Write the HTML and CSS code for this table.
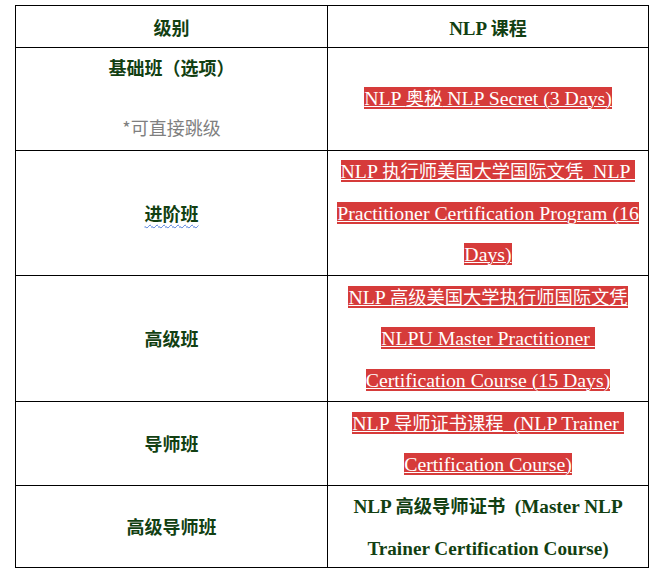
FILE: index.html
```html
<!DOCTYPE html>
<html lang="zh">
<head>
<meta charset="utf-8">
<title>NLP 课程</title>
<link rel="stylesheet" href="styles.css">
</head>
<body>
<div class="table">
  <div class="cell head head-zh"><p>级别</p></div>
  <div class="cell head"><p>NLP <span class="zh">课程</span></p></div>

  <div class="cell level r1">
    <p class="lv">基础班（选项）</p>
    <p class="note">*可直接跳级</p>
  </div>
  <div class="cell course r1">
    <p class="lines"><span class="hl">NLP <span class="zh">奥秘</span> NLP Secret (3 Days)</span></p>
  </div>

  <div class="cell level r2">
    <p class="lv"><span class="spell">进阶班</span></p>
  </div>
  <div class="cell course r2">
    <p class="lines"><span class="hl">NLP <span class="zh">执行师美国大学国际文凭</span>&nbsp; NLP&nbsp;</span><br><span class="hl">Practitioner Certification Program (16</span><br><span class="hl">Days)</span></p>
  </div>

  <div class="cell level r3">
    <p class="lv">高级班</p>
  </div>
  <div class="cell course r3">
    <p class="lines"><span class="hl">NLP <span class="zh">高级美国大学执行师国际文凭</span></span><br><span class="hl">NLPU Master Practitioner&nbsp;</span><br><span class="hl">Certification Course (15 Days)</span></p>
  </div>

  <div class="cell level r4">
    <p class="lv">导师班</p>
  </div>
  <div class="cell course r4">
    <p class="lines"><span class="hl">NLP <span class="zh">导师证书课程</span>&nbsp; (NLP Trainer&nbsp;</span><br><span class="hl">Certification Course)</span></p>
  </div>

  <div class="cell level r5">
    <p class="lv">高级导师班</p>
  </div>
  <div class="cell course r5">
    <p class="lines bold">NLP <span class="zh">高级导师证书</span>&nbsp; (Master NLP<br>Trainer Certification Course)</p>
  </div>
</div>
</body>
</html>
```

FILE: styles.css
```css
html, body {
  margin: 0;
  padding: 0;
  background: #ffffff;
}

body {
  padding: 5px 0 0 15px;
  font-family: "Liberation Serif", "Noto Sans CJK SC", serif;
}

.table {
  display: grid;
  grid-template-columns: 311px 320px;
  grid-template-rows: 41px 102px 124px 125px 83px 81px;
  gap: 1px;
  padding: 1px;
  background: #000000;
  width: max-content;
}

.cell {
  background: #ffffff;
  display: flex;
  flex-direction: column;
  align-items: center;
  justify-content: center;
  text-align: center;
  padding: 0 4px;
  min-width: 0;
}

.level.r1 {
  padding-bottom: 4px;
}

.course.r1 {
  padding-bottom: 2px;
}

p {
  margin: 0;
}

.zh {
  font-family: "Noto Sans CJK SC", sans-serif;
  font-size: 18.3px;
}

.head {
  font-family: "Liberation Serif", "Noto Sans CJK SC", serif;
  font-weight: bold;
  font-size: 19px;
  color: #123f12;
}

.head .zh {
  font-size: 18px;
}

.head-zh {
  font-family: "Noto Sans CJK SC", sans-serif;
  font-size: 18px;
}

.lv {
  font-family: "Noto Sans CJK SC", sans-serif;
  font-weight: bold;
  font-size: 18px;
  line-height: 41px;
  color: #123f12;
}

.note {
  font-family: "Noto Sans CJK SC", sans-serif;
  font-size: 18px;
  line-height: 41px;
  margin-top: 19px;
  color: #7f7f7f;
}

.spell {
  text-decoration: underline wavy #4a78d8;
  text-decoration-thickness: 1px;
  text-underline-offset: 3px;
}

.lines {
  font-family: "Liberation Serif", "Noto Sans CJK SC", serif;
  font-size: 19.8px;
  line-height: 41.5px;
  white-space: nowrap;
}

.hl {
  background: #d63b3a;
  color: #ffffff;
  text-decoration: underline;
  text-decoration-color: #ffffff;
  text-decoration-thickness: 1px;
}

.bold {
  font-weight: bold;
  font-size: 19.2px;
  color: #123f12;
  line-height: 42px;
}

.bold .zh {
  font-size: 18.3px;
}
```
